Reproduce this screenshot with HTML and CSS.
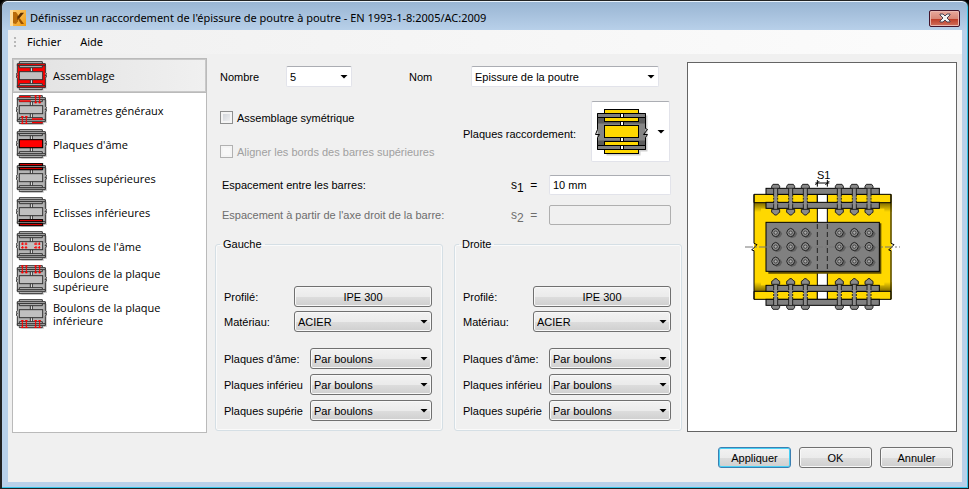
FILE: index.html
```html
<!DOCTYPE html>
<html lang="fr">
<head>
    <meta charset="UTF-8">
    <meta name="viewport" content="width=device-width, initial-scale=1.0">
    <title>Définissez un raccordement de l'épissure de poutre à poutre</title>
    <link rel="stylesheet" href="styles.css">
</head>
<body>

    <!-- Shared drawings -->
    <svg class="defs" width="0" height="0" aria-hidden="true">
        <defs>
            <linearGradient id="shade-top" x1="0" y1="0" x2="0" y2="1">
                <stop offset="0" stop-color="#7d6800"/>
                <stop offset="1" stop-color="#ffd800"/>
            </linearGradient>
            <linearGradient id="shade-bottom" x1="0" y1="1" x2="0" y2="0">
                <stop offset="0" stop-color="#7d6800"/>
                <stop offset="1" stop-color="#ffd800"/>
            </linearGradient>
            <linearGradient id="logo-gold" x1="0" y1="0" x2="1" y2="1">
                <stop offset="0" stop-color="#ffd27a"/>
                <stop offset="1" stop-color="#f09a10"/>
            </linearGradient>

            <!-- Small beam splice, "color" fills the beam -->
            <symbol id="beam" viewBox="0 0 96 90">
                <path d="M16 6H83V14H93V84H84V89H16z" fill="#d4d4d4"/>
                <rect x="4" y="10" width="84" height="69" fill="currentColor"/>
                <path d="M4 10V35L-1 42H4L1 48L4 52V78M88 10V35L92 38L87 44H92L88 52V78" fill="none" stroke="#333" stroke-width="3"/>
                <rect x="43" y="13" width="6" height="63" fill="#fff" stroke="#333" stroke-width="3"/>
                <g fill="#c0c0c0" stroke="#333" stroke-width="3">
                    <path d="M10 8V2H79V8M10 82V86H79V82"/>
                    <path d="M4 8H88V14H4zM4 74H88V80H4z" fill="currentColor"/>
                    <path d="M10 14H79V20H10zM10 68H79V74H10z"/>
                    <rect x="10" y="32" width="70" height="24"/>
                </g>
            </symbol>

            <symbol id="pin" viewBox="0 0 10 30">
                <path d="M5 3V27M1 5H9M1 25H9" stroke="#f00" stroke-width="3" fill="none"/>
            </symbol>

            <!-- Bolt head seen from the front -->
            <g id="nut">
                <path d="M-6 8L2 17L14 13L20 3L14 -6z" fill="#606060"/>
                <path d="M-12 0L-8 -9L0 -13L8 -9L12 0L8 9L0 12L-8 9z" fill="#8a8a8a" stroke="#222" stroke-width="3"/>
                <circle r="5" fill="#aaa" stroke="#222" stroke-width="2"/>
            </g>

            <!-- Bolt seen from the side, through both plates -->
            <g id="bolt">
                <path d="M-12 -11L-8 -17H8L12 -11V-5H-12z" fill="#8a8a8a" stroke="#222" stroke-width="3"/>
                <rect x="-5" y="-4" width="10" height="64" fill="#8c8c8c"/>
                <path d="M-6 -4V12M6 -4V12M-6 44V60M6 44V60" stroke="#222" stroke-width="3"/>
                <path d="M-6 14V44M6 14V44" stroke="#222" stroke-width="3" stroke-dasharray="6 3"/>
                <path d="M-12 58H12V67L7 70L3 75H-3L-7 70L-12 67z" fill="#8a8a8a" stroke="#222" stroke-width="3"/>
            </g>
            <g id="bolt-row">
                <use href="#bolt" x="92"/>
                <use href="#bolt" x="137"/>
                <use href="#bolt" x="181"/>
                <use href="#bolt" x="283"/>
                <use href="#bolt" x="328"/>
                <use href="#bolt" x="372"/>
            </g>
            <g id="nut-row">
                <use href="#nut" x="92"/>
                <use href="#nut" x="137"/>
                <use href="#nut" x="181"/>
                <use href="#nut" x="283"/>
                <use href="#nut" x="328"/>
                <use href="#nut" x="372"/>
            </g>
        </defs>
    </svg>

    <div class="window">

        <!-- Title bar -->
        <header class="titlebar">
            <svg class="logo" viewBox="0 0 48 48" aria-hidden="true">
                <rect width="48" height="48" fill="url(#logo-gold)"/>
                <path d="M0 0H9V48H0z" fill="#ffdc98"/>
                <path d="M9 6H18L24 14V34L18 42L9 40z" fill="#b86a08"/>
                <path d="M22 20L32 8H42L29 24L22 30z" fill="#5f3000"/>
                <path d="M24 28L29 24L42 42H33z" fill="#9a5200"/>
            </svg>
            <h1>Définissez un raccordement de l'épissure de poutre à poutre - EN 1993-1-8:2005/AC:2009</h1>
            <button class="close" type="button" aria-label="Fermer">
                <svg viewBox="0 0 12 10" width="12" height="10" aria-hidden="true">
                    <path d="M1 1H4L6 3L8 1H11V2L8 5L11 8V9H8L6 7L4 9H1V8L4 5L1 2z" fill="#f4f4f4" stroke="#4d4250"/>
                </svg>
            </button>
        </header>

        <div class="client">
            <nav class="menubar">
                <span class="grip"></span>
                <a href="#">Fichier</a>
                <a href="#">Aide</a>
            </nav>

            <main class="content">

                <!-- Section list -->
                <nav class="sections">
                    <a class="section active" href="#">
                        <svg class="icon red" viewBox="-3 0 96 90"><use href="#beam" width="96" height="90"/></svg>
                        <span>Assemblage</span>
                    </a>
                    <a class="section" href="#">
                        <svg class="icon" viewBox="-3 0 96 90">
                            <use href="#beam" width="96" height="90"/>
                            <path d="M10 5H44M10 18H44M48 72H80M48 83H80" stroke="#f00" stroke-width="4"/>
                            <use href="#pin" x="54" y="-2" width="10" height="30"/>
                            <use href="#pin" x="66" y="-2" width="10" height="30"/>
                            <use href="#pin" x="14" y="60" width="10" height="30"/>
                            <use href="#pin" x="26" y="60" width="10" height="30"/>
                        </svg>
                        <span>Paramètres généraux</span>
                    </a>
                    <a class="section" href="#">
                        <svg class="icon" viewBox="-3 0 96 90">
                            <use href="#beam" width="96" height="90"/>
                            <rect x="10" y="32" width="70" height="24" fill="#f00" stroke="#000" stroke-width="3"/>
                        </svg>
                        <span>Plaques d'âme</span>
                    </a>
                    <a class="section" href="#">
                        <svg class="icon" viewBox="-3 0 96 90">
                            <use href="#beam" width="96" height="90"/>
                            <g fill="#f00" stroke="#000" stroke-width="3">
                                <rect x="10" y="2" width="70" height="6"/>
                                <rect x="10" y="14" width="70" height="6"/>
                            </g>
                        </svg>
                        <span>Eclisses supérieures</span>
                    </a>
                    <a class="section" href="#">
                        <svg class="icon" viewBox="-3 0 96 90">
                            <use href="#beam" width="96" height="90"/>
                            <g fill="#f00" stroke="#000" stroke-width="3">
                                <rect x="10" y="68" width="70" height="6"/>
                                <rect x="10" y="80" width="70" height="6"/>
                            </g>
                        </svg>
                        <span>Eclisses inférieures</span>
                    </a>
                    <a class="section" href="#">
                        <svg class="icon" viewBox="-3 0 96 90">
                            <use href="#beam" width="96" height="90"/>
                            <path d="M15 39H35M15 50H35M54 39H76M54 50H76M20 34V55M30 34V55M60 34V55M70 34V55" stroke="#f00" stroke-width="3" stroke-dasharray="8 3"/>
                        </svg>
                        <span>Boulons de l'âme</span>
                    </a>
                    <a class="section" href="#">
                        <svg class="icon" viewBox="-3 0 96 90">
                            <use href="#beam" width="96" height="90"/>
                            <use href="#pin" x="14" y="-2" width="10" height="30"/>
                            <use href="#pin" x="26" y="-2" width="10" height="30"/>
                            <use href="#pin" x="54" y="-2" width="10" height="30"/>
                            <use href="#pin" x="66" y="-2" width="10" height="30"/>
                        </svg>
                        <span>Boulons de la plaque supérieure</span>
                    </a>
                    <a class="section" href="#">
                        <svg class="icon" viewBox="-3 0 96 90">
                            <use href="#beam" width="96" height="90"/>
                            <use href="#pin" x="14" y="60" width="10" height="30"/>
                            <use href="#pin" x="26" y="60" width="10" height="30"/>
                            <use href="#pin" x="54" y="60" width="10" height="30"/>
                            <use href="#pin" x="66" y="60" width="10" height="30"/>
                        </svg>
                        <span>Boulons de la plaque inférieure</span>
                    </a>
                </nav>

                <!-- Parameters -->
                <form class="form">
                    <div class="row row-name">
                        <label for="number">Nombre</label>
                        <span class="combo combo-number"><select id="number"><option>5</option></select></span>
                        <label class="label-name" for="name">Nom</label>
                        <span class="combo combo-name"><select id="name"><option>Epissure de la poutre</option></select></span>
                    </div>

                    <div class="row row-options">
                        <div class="checks">
                            <label class="check"><input type="checkbox"> Assemblage symétrique</label>
                            <label class="check disabled"><input type="checkbox" disabled> Aligner les bords des barres supérieures</label>
                        </div>
                        <label class="label-plates" for="plates">Plaques raccordement:</label>
                        <button id="plates" class="picker" type="button" aria-haspopup="listbox">
                            <svg width="52" height="45" viewBox="-0.5 -0.5 52 45" aria-hidden="true">
                                <path d="M10 3H44V6H51V42H44V46H10z" fill="#d0d0d0"/>
                                <rect x="1" y="4" width="48" height="36" fill="#858585"/>
                                <path d="M1 8H49V14H1zM1 31H49V36H1z" fill="#5c5c5c"/>
                                <path d="M1 4V20L-1 25H3L1 28V40M49 4V19L51 20L47 25H51L49 28V40" fill="none" stroke="#000"/>
                                <rect x="24" y="4" width="3" height="36" fill="#fff" stroke="#000"/>
                                <path d="M1 4H24V8H1zM27 4H49V8H27zM1 36H24V40H1zM27 36H49V40H27z" fill="#808080" stroke="#000"/>
                                <g fill="#ffd800" stroke="#000">
                                    <rect x="8" y="0" width="34" height="4"/>
                                    <rect x="8" y="8" width="34" height="4"/>
                                    <rect x="8" y="16" width="34" height="12"/>
                                    <rect x="8" y="32" width="34" height="4"/>
                                    <rect x="8" y="40" width="34" height="4"/>
                                </g>
                            </svg>
                        </button>
                    </div>

                    <div class="row row-gap">
                        <label for="s1">Espacement entre les barres:</label>
                        <span class="symbol">s<sub>1</sub>&nbsp; =</span>
                        <input id="s1" type="text" value="10 mm">
                    </div>
                    <div class="row row-gap disabled">
                        <label for="s2">Espacement à partir de l'axe droit de la barre:</label>
                        <span class="symbol">s<sub>2</sub>&nbsp; =</span>
                        <input id="s2" type="text" disabled>
                    </div>

                    <div class="groups">
                        <fieldset>
                            <legend>Gauche</legend>
                            <div class="field wide">
                                <label for="left-profile">Profilé:</label>
                                <button id="left-profile" class="btn" type="button">IPE 300</button>
                            </div>
                            <div class="field wide">
                                <label for="left-material">Matériau:</label>
                                <span class="combo flat"><select id="left-material"><option>ACIER</option></select></span>
                            </div>
                            <div class="field first">
                                <label for="left-web">Plaques d'âme:</label>
                                <span class="combo flat"><select id="left-web"><option>Par boulons</option></select></span>
                            </div>
                            <div class="field">
                                <label for="left-lower">Plaques inférieu</label>
                                <span class="combo flat"><select id="left-lower"><option>Par boulons</option></select></span>
                            </div>
                            <div class="field">
                                <label for="left-upper">Plaques supérie</label>
                                <span class="combo flat"><select id="left-upper"><option>Par boulons</option></select></span>
                            </div>
                        </fieldset>
                        <fieldset>
                            <legend>Droite</legend>
                            <div class="field wide">
                                <label for="right-profile">Profilé:</label>
                                <button id="right-profile" class="btn" type="button">IPE 300</button>
                            </div>
                            <div class="field wide">
                                <label for="right-material">Matériau:</label>
                                <span class="combo flat"><select id="right-material"><option>ACIER</option></select></span>
                            </div>
                            <div class="field first">
                                <label for="right-web">Plaques d'âme:</label>
                                <span class="combo flat"><select id="right-web"><option>Par boulons</option></select></span>
                            </div>
                            <div class="field">
                                <label for="right-lower">Plaques inférieu</label>
                                <span class="combo flat"><select id="right-lower"><option>Par boulons</option></select></span>
                            </div>
                            <div class="field">
                                <label for="right-upper">Plaques supérie</label>
                                <span class="combo flat"><select id="right-upper"><option>Par boulons</option></select></span>
                            </div>
                        </fieldset>
                    </div>
                </form>

                <!-- Preview drawing -->
                <div class="preview">
                    <svg width="155" height="174" viewBox="0 0 465 522" role="img" aria-label="Epissure de la poutre">
                        <!-- Beam halves -->
                        <rect x="27" y="103" width="413" height="315" fill="#ffd800"/>
                        <rect x="27" y="128" width="413" height="28" fill="url(#shade-top)"/>
                        <rect x="27" y="366" width="413" height="28" fill="url(#shade-bottom)"/>
                        <rect x="48" y="146" width="370" height="230" fill="#ffd800"/>
                        <g fill="none" stroke="#000" stroke-width="3">
                            <path d="M27 103H217V128H27zM247 103H438V128H247zM27 394H217V418H27zM247 394H438V418H247z" fill="#ffd800"/>
                            <rect x="217" y="103" width="30" height="315" fill="#fff"/>
                            <path d="M27 103V250L36 254L20 270L27 272V418M438 103V250L447 254L431 270L438 272V418"/>
                        </g>
                        <!-- Flange plates -->
                        <g fill="#808080" stroke="#000" stroke-width="3">
                            <rect x="63" y="85" width="340" height="18"/>
                            <rect x="63" y="127" width="340" height="18"/>
                            <rect x="63" y="376" width="340" height="18"/>
                            <rect x="63" y="418" width="340" height="18"/>
                        </g>
                        <!-- Web plate -->
                        <path d="M70 190H409V341H70z" fill="#5c4c00"/>
                        <rect x="63" y="187" width="340" height="147" fill="#808080" stroke="#000" stroke-width="3"/>
                        <path d="M217 192V332M247 192V332" stroke="#222" stroke-width="3" stroke-dasharray="15 9"/>
                        <path d="M0 261H465" stroke="#777" stroke-width="3" stroke-dasharray="24 6 6 6"/>
                        <use href="#nut-row" y="218"/>
                        <use href="#nut-row" y="260"/>
                        <use href="#nut-row" y="304"/>
                        <use href="#bolt-row" y="90"/>
                        <use href="#bolt-row" transform="matrix(1 0 0 -1 0 431)"/>
                        <!-- Dimension -->
                        <path d="M211 69H253M217 60V80M247 60V80" stroke="#000" stroke-width="3"/>
                        <path d="M211 75L223 63M241 75L253 63" stroke="#000" stroke-width="3"/>
                        <text x="216" y="56">S1</text>
                    </svg>
                </div>
            </main>

            <footer class="actions">
                <button class="btn default" type="button">Appliquer</button>
                <button class="btn" type="button">OK</button>
                <button class="btn" type="button">Annuler</button>
            </footer>
        </div>
    </div>

</body>
</html>
```
FILE: styles.css
```css
* {
    box-sizing: border-box;
}

body {
    margin: 0;
    background: #000;
    color: #000;
    font-family: "Liberation Sans", Arial, sans-serif;
    font-size: 11px;
    line-height: 14px;
}

a {
    color: inherit;
    text-decoration: none;
}

button, input, select {
    font: inherit;
    color: inherit;
    margin: 0;
}

.defs {
    position: absolute;
}

/* Window frame */
.window {
    display: flex;
    flex-direction: column;
    min-height: 100vh;
    padding: 0 6px 6px;
    border: 1px solid #222;
    border-left-width: 2px;
    border-radius: 7px 7px 0 0;
    background: linear-gradient(#98b4d2, #b9d1ea 30px);
    box-shadow: inset -1px -1px #36c5ea, inset 0 1px #e8f1fa;
}

.titlebar {
    display: flex;
    align-items: center;
    gap: 4px;
    height: 29px;
    padding: 5px 2px 0;
}

.titlebar h1 {
    flex: 1;
    margin: 0;
    font: 11px/16px "Noto Sans", "Open Sans", sans-serif;
}

.logo {
    width: 16px;
    height: 16px;
}

.close {
    display: grid;
    place-items: center;
    width: 31px;
    height: 17px;
    padding: 0;
    border: 1px solid #43142a;
    border-radius: 2px;
    background: linear-gradient(#e9a99c, #d98878 50%, #bd3a24 51%, #d0705c);
    box-shadow: inset 0 0 0 1px #eab8b0;
}

.client {
    flex: 1;
    display: flex;
    flex-direction: column;
    background: #f0f0f0;
}

.menubar {
    display: flex;
    align-items: center;
    gap: 19px;
    height: 24px;
    padding-left: 6px;
    background: linear-gradient(90deg, #f0f0f0, #fcfcfc);
    font: 11px/16px "Noto Sans", "Open Sans", sans-serif;
}

.grip {
    width: 2px;
    height: 11px;
    margin-right: -8px;
    background: repeating-linear-gradient(#b8b8b8 0 2px, transparent 2px 4px);
}

.content {
    display: grid;
    grid-template-columns: 195px 1fr 270px;
    padding: 4px 5px 0 4px;
}

/* Section list */
.sections {
    height: 375px;
    border: 1px solid #bababa;
    background: #fff;
    font: 11px/13px "Open Sans", "Noto Sans", sans-serif;
}

.section {
    display: grid;
    grid-template-columns: 32px 120px;
    column-gap: 6px;
    align-items: center;
    height: 34px;
    padding-left: 2px;
}

.section.active {
    border-bottom: 1px solid #bababa;
    box-shadow: inset 0 0 0 1px #c8c8c8;
    background: linear-gradient(90deg, #e2e2e2, #f0f0f0);
}

.icon {
    width: 32px;
    height: 30px;
    color: #b4b4b4;
}

.icon.red {
    color: #f00;
}

/* Form */
.form {
    display: flex;
    flex-direction: column;
    padding: 8px 5px 0 8px;
}

.row {
    display: flex;
    align-items: center;
}

.row-name label {
    width: 71px;
    padding-left: 5px;
}

.row-name .label-name {
    margin-left: 52px;
    width: 67px;
}

.combo-number {
    width: 66px;
}

.combo-name {
    width: 188px;
}

.combo {
    display: grid;
    align-items: center;
}

.combo select {
    grid-area: 1 / 1;
    width: 100%;
    height: 21px;
    padding: 0 16px 0 3px;
    appearance: none;
    border: 1px solid #e2e3ea;
    border-top-color: #abadb3;
    border-radius: 2px;
    background: #fff;
}

.combo::after {
    content: "";
    grid-area: 1 / 1;
    justify-self: end;
    width: 8px;
    height: 4px;
    margin-right: 4px;
    background: #000;
    clip-path: polygon(0 0, 100% 0, 50% 100%);
    pointer-events: none;
}

.row-options {
    height: 61px;
    margin-top: 14px;
}

.checks {
    display: grid;
    gap: 20px;
    width: 248px;
    padding: 6px 0 0 5px;
}

.label-plates {
    padding-top: 4px;
}

.check {
    display: flex;
    align-items: center;
    gap: 4px;
}

.check input {
    width: 13px;
    height: 13px;
    appearance: none;
    border: 1px solid #8e8f8f;
    background: linear-gradient(135deg, #cbcfd5, #f6f6f6);
    box-shadow: inset 0 0 0 2px #f4f4f4;
}

.check.disabled {
    color: #a0a0a0;
}

.check.disabled input {
    border-color: #b1b1b1;
    background: #f8f8f8;
}

.picker {
    display: flex;
    align-items: center;
    gap: 9px;
    width: 79px;
    height: 61px;
    margin-left: auto;
    margin-right: 12px;
    padding: 0 4px;
    border: 1px solid #e2e3ea;
    border-top-color: #abadb3;
    border-radius: 2px;
    background: #fff;
}

.picker svg {
    flex: none;
    overflow: visible;
}

.picker::after {
    content: "";
    flex: none;
    width: 8px;
    height: 4px;
    background: #000;
    clip-path: polygon(0 0, 100% 0, 50% 100%);
}

.row-gap {
    height: 20px;
    margin-top: 13px;
    padding: 0 11px 0 7px;
}

.row-gap + .row-gap {
    margin-top: 10px;
}

.row-gap label {
    flex: 1;
}

.row-gap.disabled {
    color: #6d6d6d;
}

.symbol {
    width: 38px;
    font-size: 12px;
    line-height: 20px;
}

.symbol sub {
    font-size: 12px;
    line-height: 0;
}

.row-gap input {
    width: 122px;
    height: 20px;
    padding: 0 3px;
    border: 1px solid #e2e3ea;
    border-top-color: #abadb3;
    border-radius: 2px;
    background: #fff;
}

.row-gap input:disabled {
    border-color: #afafaf;
    background: #f0f0f0;
}

/* Left and right groups */
.groups {
    display: grid;
    grid-template-columns: 1fr 1fr;
    gap: 11px;
    margin-top: 12px;
}

fieldset {
    min-width: 0;
    margin: 0;
    padding: 35px 10px 9px 8px;
    border: 1px solid #d5dfe5;
    border-radius: 3px;
    box-shadow: inset 0 0 0 1px #fafafa;
}

legend {
    margin-left: -4px;
    padding: 0 3px;
}

.field {
    display: grid;
    grid-template-columns: 1fr 122px;
    align-items: center;
    margin-bottom: 5px;
    white-space: nowrap;
}

.field:last-child {
    margin-bottom: 0;
}

.field.wide {
    grid-template-columns: 1fr 138px;
    margin-bottom: 4px;
}

.field.first {
    margin-top: 16px;
}

.btn,
.combo.flat select {
    height: 21px;
    border: 1px solid #707070;
    border-radius: 3px;
    background: linear-gradient(#f2f2f2, #ebebeb 50%, #dddddd 51%, #cfcfcf);
    box-shadow: inset 0 0 0 1px #f8f8f8;
}

.btn {
    padding: 0;
}

/* Preview */
.preview {
    display: grid;
    place-items: center;
    height: 370px;
    margin-top: 4px;
    border: 1px solid #646464;
    background: #fff;
}

.preview text {
    font-size: 33px;
}

/* Bottom buttons */
.actions {
    display: flex;
    justify-content: flex-end;
    gap: 8px;
    padding: 14px 9px 13px;
}

.actions .btn {
    width: 73px;
}

.btn.default {
    border-color: #3c7fb1;
    box-shadow: inset 0 0 0 1px #48d0f5;
}
```
